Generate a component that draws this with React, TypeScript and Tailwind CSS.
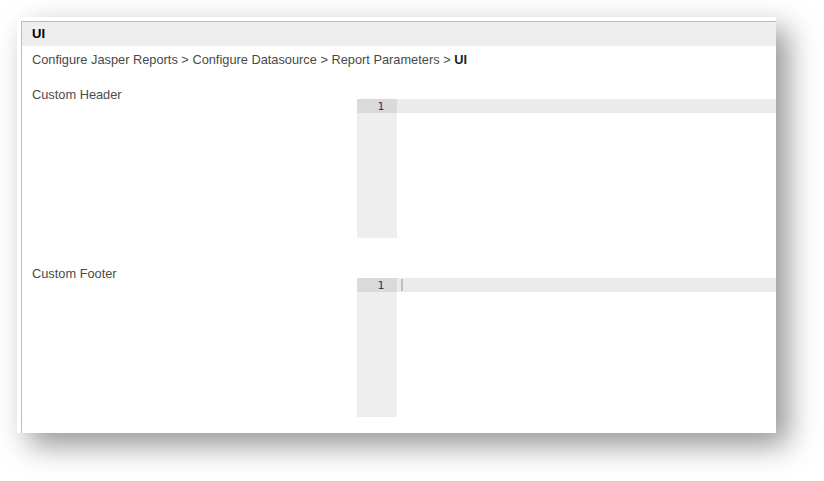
import React from "react";

function Editor({ cursor }: { cursor?: boolean }) {
  return (
    <div className="flex-1 h-[139px] flex bg-white">
      <div className="w-[40px] h-full bg-[#eeeeee] flex flex-col">
        <div className="h-[14px] bg-[#dadada] flex items-center justify-end pr-[13px] text-[11px] leading-none text-[#3a2a5a] font-['DejaVu_Sans_Mono',monospace]">
          1
        </div>
      </div>
      <div className="flex-1 flex flex-col">
        <div className="h-[14px] bg-[#ebebeb] relative">
          {cursor && <div className="absolute left-[4px] top-[1px] w-[2px] h-[12px] bg-[#bdbdbd]" />}
        </div>
      </div>
    </div>
  );
}

export default function App() {
  return (
    <div className="w-[824px] h-[481px] bg-white pt-[17px] pl-[17px] font-['Liberation_Sans',Arial,sans-serif]">
      <div className="w-[759px] h-[416px] bg-white pt-[4px] pl-[4px] shadow-[12px_12px_28px_rgba(0,0,0,0.42)]">
        <div className="w-full h-full border-t border-l border-[#bcbcbc] overflow-hidden flex flex-col">
          <div className="h-[24px] bg-[#eeeeee] flex items-center pl-[10px] text-[13px] font-bold text-black">
            UI
          </div>
          <div className="mt-[5px] pl-[10px] h-[17px] flex items-center text-[12.8px] text-[#4a4a4a]">
            Configure Jasper Reports &gt; Configure Datasource &gt; Report Parameters &gt;&nbsp;
            <span className="font-bold text-[#222]">UI</span>
          </div>
          <div className="mt-[18px] flex flex-col gap-[27px] pl-[10px]">
            <div className="flex">
              <div className="w-[325px] text-[12.8px] leading-[17px] text-[#4a4a4a]">Custom Header</div>
              <div className="flex-1 mt-[13px] flex">
                <Editor />
              </div>
            </div>
            <div className="flex">
              <div className="w-[325px] text-[12.8px] leading-[17px] text-[#4a4a4a]">Custom Footer</div>
              <div className="flex-1 mt-[13px] flex">
                <Editor cursor />
              </div>
            </div>
          </div>
        </div>
      </div>
    </div>
  );
}
